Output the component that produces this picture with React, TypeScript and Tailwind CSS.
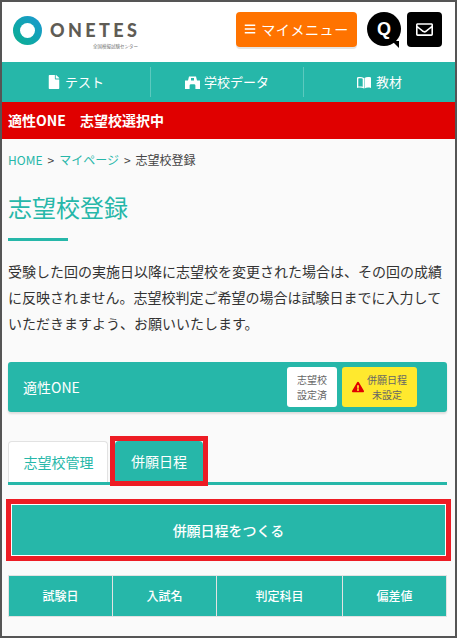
import React from 'react';
import { FaBars, FaExclamationTriangle, FaFile, FaRegEnvelope } from 'react-icons/fa';

const font = "font-['Noto_Sans_CJK_JP','Noto_Sans',sans-serif]";

function SchoolIcon() {
  return (
    <svg width="15" height="13" viewBox="0 0 15 13" fill="currentColor">
      <path d="M4 0.5h7l1 4h3v8.5h-4.6v-3.4a1.4 1.4 0 0 0-1.4-1.4h-3a1.4 1.4 0 0 0-1.4 1.4v3.4H0V4.500h3z" />
      <rect x="6" y="2" width="3" height="2.500" fill="#26b7a9" />
    </svg>
  );
}

function BookIcon() {
  return (
    <svg width="14" height="13" viewBox="0 0 14 13" fill="currentColor">
      <path d="M0 1.500C2.500 0.700 5 0.900 7 2v10.500c-2-1-4.500-1.200-7-0.500zM1.300 2.500v8c1.600-0.200 3.100-0.100 4.400 0.300V2.800C4.400 2.200 2.900 2.200 1.300 2.500z" />
      <path d="M14 1.500C11.500 0.700 9 0.900 7.500 2v10.500c1.600-1 4-1.200 6.500-0.500z" />
    </svg>
  );
}

function Header() {
  return (
    <header className="flex h-[60px] items-center bg-white pr-[13px] pl-[11px]">
      {/*Logo*/}
      <div className="flex flex-col">
        <div className="flex items-center gap-[8px]">
          <div className="flex h-[29px] w-[29px] items-center justify-center rounded-full bg-gradient-to-tr from-[#10b08c] to-[#1e96d2]">
            <div className="h-[15px] w-[15px] rounded-full bg-white" />
          </div>
          <span className="font-['Lato',sans-serif] text-[18px] leading-none font-black tracking-[3.4px] text-[#5f5c55]">
            ONETES
          </span>
        </div>
        <span className="-mt-[2px] pl-[80px] text-[4.5px] leading-[6px] whitespace-nowrap text-[#777]">
          全国模擬試験センター
        </span>
      </div>
      <div className="mb-[6px] ml-auto flex items-center">
        <a className="flex h-[35px] w-[121px] items-center justify-center gap-[5px] rounded-[4px] bg-[#ff7300] text-[14px] tracking-[0.6px] text-white shadow-[0_2px_0_#e4e4e4]">
          <FaBars className="h-[12px] w-[12px]" />
          マイメニュー
        </a>
        <div className="relative ml-[10px] flex h-[34px] w-[34px] items-center justify-center rounded-full bg-black font-['Liberation_Sans',sans-serif] text-[18px] font-bold text-white">
          Q
          <span className="absolute right-[2px] bottom-[-2px] h-0 w-0 border-t-[7px] border-l-[7px] border-t-black border-l-transparent" />
        </div>
        <div className="ml-[6px] flex h-[35px] w-[35px] items-center justify-center rounded-[4px] bg-black text-white">
          <FaRegEnvelope className="h-[17px] w-[17px]" />
        </div>
      </div>
    </header>
  );
}

function Nav() {
  return (
    <nav className="flex h-[40px] items-center bg-[#26b7a9] text-[13px] text-white">
      <div className="flex h-[30px] w-[148px] items-center justify-center gap-[5px]">
        <FaFile className="h-[14px] w-[12px]" />
        テスト
      </div>
      <div className="flex h-[30px] w-[153px] items-center justify-center gap-[4px] border-l border-[#5cc9be]">
        <SchoolIcon />
        学校データ
      </div>
      <div className="flex h-[30px] flex-1 items-center justify-center gap-[5px] border-l border-[#5cc9be]">
        <BookIcon />
        教材
      </div>
    </nav>
  );
}

function Card() {
  return (
    <div className="mt-[26px] flex h-[50px] items-center rounded-[3px] bg-[#26b7a9] pr-[30px] pl-[15px] text-white shadow-[0_2px_2px_#ddd]">
      <span className="text-[14px]">適性ONE</span>
      <div className="ml-auto flex h-[40px] w-[50px] flex-col items-center justify-center rounded-[3px] bg-white text-[10px] leading-[15px] text-[#666]">
        <span>志望校</span>
        <span>設定済</span>
      </div>
      <div className="ml-[5px] flex h-[40px] w-[75px] items-center justify-center gap-[3px] rounded-[3px] bg-[#ffe92e] text-[10px] leading-[15px] text-[#666]">
        <FaExclamationTriangle className="h-[12px] w-[12px] text-[#e00000]" />
        <div className="flex flex-col items-center">
          <span>併願日程</span>
          <span>未設定</span>
        </div>
      </div>
    </div>
  );
}

function Tabs() {
  return (
    <div className="mt-[29px] flex h-[44px] gap-[7px] border-b-[3px] border-[#26b7a9] text-[14px]">
      <div className="flex w-[100px] items-center justify-center rounded-t-[4px] border border-b-0 border-[#e2e2e2] bg-white pl-[1px] text-[#26b7a9]">
        志望校管理
      </div>
      <div className="relative mb-[1px] flex w-[88px] items-center justify-center rounded-t-[4px] bg-[#26b7a9] text-white">
        併願日程
        {/*Red marker over the tab*/}
        <span className="absolute -inset-[5px] border-[5px] border-[#ed1c24]" />
      </div>
    </div>
  );
}

export default function App() {
  const columns = [
    { label: '試験日', width: 'w-[103px]' },
    { label: '入試名', width: 'w-[104px]' },
    { label: '判定科目', width: 'w-[126px]' },
    { label: '偏差値', width: 'flex-1' },
  ];
  return (
    <div className={`${font} h-[638px] overflow-hidden border-2 border-[#555] bg-[#fafafa] text-[#333]`}>
      <Header />
      <Nav />
      <div className="flex h-[37px] items-center bg-[#e00000] pl-[6px] text-[14px] font-bold whitespace-pre text-white">
        適性ONE　志望校選択中
      </div>
      <main className="pr-[8px] pl-[6px]">
        <div className="mt-[12px] flex h-[18px] items-center text-[12px] text-[#444]">
          <span className="text-[#26b7a9]">HOME</span>
          <span className="mx-[5px]">&gt;</span>
          <span className="text-[#26b7a9]">マイページ</span>
          <span className="mx-[5px]">&gt;</span>
          <span>志望校登録</span>
        </div>
        <h1 className="mt-[19px] text-[24px] leading-[38px] text-[#26b7a9]">志望校登録</h1>
        <div className="mt-[12px] h-[3px] w-[60px] bg-[#26b7a9]" />
        <p className="mt-[17px] text-[14px] leading-[26px] text-[#333]">
          受験した回の実施日以降に志望校を変更された場合は、その回の成績に反映されません。志望校判定ご希望の場合は試験日までに入力していただきますよう、お願いいたします。
        </p>
        <Card />
        <Tabs />
        <div className="relative mt-[19px] ml-[3px] w-[435px]">
          <button className="flex h-[52px] w-full items-center justify-center border border-white bg-[#26b7a9] text-[14px] font-medium text-white">
            併願日程をつくる
          </button>
          {/*Red marker over the button*/}
          <span className="absolute -inset-[5px] border-[5px] border-[#ed1c24]" />
        </div>
        <div className="mt-[19px] flex h-[42px] border border-[#e2e2e2] bg-[#26b7a9] text-[12px] font-medium text-white">
          {columns.map((col, index) => (
            <div
              key={col.label}
              className={`flex items-center justify-center ${col.width} ${index > 0 ? 'border-l border-[#e2e2e2]' : ''}`}
            >
              {col.label}
            </div>
          ))}
        </div>
      </main>
    </div>
  );
}
